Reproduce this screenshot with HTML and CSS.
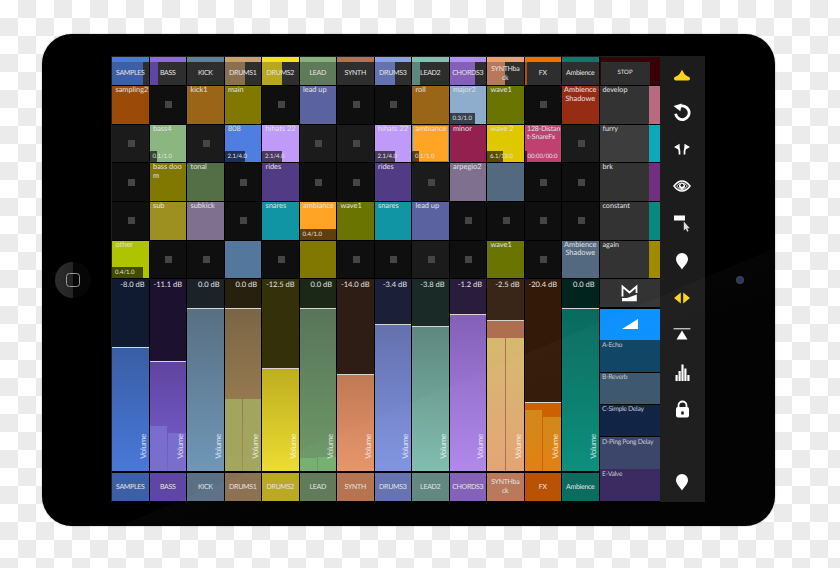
FILE: index.html
```html
<!DOCTYPE html>
<html lang="en">
<head>
<meta charset="utf-8">
<title>Live control surface</title>
<link rel="stylesheet" href="styles.css">
</head>
<body>
<div class="tablet">
  <div class="home"><div class="home-half"></div><div class="home-square"></div></div>
  <div class="camera"></div>
  <div class="app">
    <div class="mixer">
      <!-- track heads -->
      <div class="head c0"><i class="meter" style="width:84%"></i><span>SAMPLES</span></div>
      <div class="head c1"><i class="meter" style="width:22%"></i><span>BASS</span></div>
      <div class="head c2"><span>KICK</span></div>
      <div class="head c3"><i class="meter" style="width:55%"></i><span>DRUMS1</span></div>
      <div class="head c4"><i class="meter" style="width:55%"></i><span>DRUMS2</span></div>
      <div class="head c5"><i class="meter" style="width:100%"></i><span>LEAD</span></div>
      <div class="head c6"><span>SYNTH</span></div>
      <div class="head c7"><i class="meter" style="width:55%"></i><span>DRUMS3</span></div>
      <div class="head c8"><i class="meter" style="width:22%"></i><span>LEAD2</span></div>
      <div class="head c9"><i class="meter" style="width:71%"></i><span>CHORDS3</span></div>
      <div class="head c10"><i class="meter" style="width:48%"></i><span>SYNTHba<br>ck</span></div>
      <div class="head c11"><i class="meter" style="width:8%"></i><span>FX</span></div>
      <div class="head c12"><span>Ambience</span></div>
      <div class="head-stop"><span>STOP</span></div>

      <!-- row 1 -->
      <div class="clip k-rust">sampling2</div>
      <div class="clip empty"><b></b></div>
      <div class="clip k-ochre">kick1</div>
      <div class="clip k-olive">main</div>
      <div class="clip empty"><b></b></div>
      <div class="clip k-indigo">lead up</div>
      <div class="clip empty"><b></b></div>
      <div class="clip empty"><b></b></div>
      <div class="clip k-ochre">roll</div>
      <div class="clip k-sky">major2<div class="prog"><i style="width:25px"></i><span>0.3/1.0</span></div></div>
      <div class="clip k-moss">wave1</div>
      <div class="clip empty"><b></b></div>
      <div class="clip k-red center">Ambience Shadowe</div>
      <div class="scene"><span>develop</span><i class="s1"></i></div>

      <!-- row 2 -->
      <div class="clip empty lit"><b></b></div>
      <div class="clip k-sage">bass4<div class="prog"><i style="width:7px"></i><span>0.1/1.0</span></div></div>
      <div class="clip empty lit"><b></b></div>
      <div class="clip k-blue">808<div class="prog"><i style="width:20px"></i><span>2.1/4.0</span></div></div>
      <div class="clip k-lilac">hihats 22<div class="prog"><i style="width:20px"></i><span>2.1/4.0</span></div></div>
      <div class="clip empty lit"><b></b></div>
      <div class="clip empty lit"><b></b></div>
      <div class="clip k-lilac">hihats 22<div class="prog"><i style="width:20px"></i><span>2.1/4.0</span></div></div>
      <div class="clip k-amber active">ambiance<div class="prog"><i style="width:7px"></i><span>0.1/1.0</span></div></div>
      <div class="clip k-wine">minor</div>
      <div class="clip k-yellow">wave 2<div class="prog"><i style="width:16px"></i><span>6.1/13.0</span></div></div>
      <div class="clip k-pink nowrap">128-Distan<br>t-SnareFx<div class="prog"><i style="width:2px"></i><span>00:00/00:0</span></div></div>
      <div class="clip empty lit"><b></b></div>
      <div class="scene lit"><span>furry</span><i class="s2"></i></div>

      <!-- row 3 -->
      <div class="clip empty"><b></b></div>
      <div class="clip k-olive">bass doo<br>m</div>
      <div class="clip k-fern">tonal</div>
      <div class="clip empty"><b></b></div>
      <div class="clip k-violet">rides</div>
      <div class="clip empty"><b></b></div>
      <div class="clip empty"><b></b></div>
      <div class="clip k-violet">rides</div>
      <div class="clip empty lit"><b></b></div>
      <div class="clip k-mauve">arpegio2</div>
      <div class="clip k-slate"></div>
      <div class="clip empty"><b></b></div>
      <div class="clip empty"><b></b></div>
      <div class="scene"><span>brk</span><i class="s3"></i></div>

      <!-- row 4 -->
      <div class="clip empty"><b></b></div>
      <div class="clip k-mustard">sub</div>
      <div class="clip k-mauve">subkick</div>
      <div class="clip empty"><b></b></div>
      <div class="clip k-teal">snares</div>
      <div class="clip k-amber">ambiance<div class="prog"><i style="width:36px"></i><span>0.4/1.0</span></div></div>
      <div class="clip k-moss">wave1</div>
      <div class="clip k-teal">snares</div>
      <div class="clip k-indigo">lead up</div>
      <div class="clip empty"><b></b></div>
      <div class="clip empty"><b></b></div>
      <div class="clip empty"><b></b></div>
      <div class="clip empty"><b></b></div>
      <div class="scene"><span>constant</span><i class="s4"></i></div>

      <!-- row 5 -->
      <div class="clip k-lime">other<div class="prog"><i style="width:31px"></i><span>0.4/1.0</span></div></div>
      <div class="clip empty"><b></b></div>
      <div class="clip empty"><b></b></div>
      <div class="clip k-steel"></div>
      <div class="clip empty"><b></b></div>
      <div class="clip k-olive"></div>
      <div class="clip empty"><b></b></div>
      <div class="clip empty"><b></b></div>
      <div class="clip empty lit"><b></b></div>
      <div class="clip empty"><b></b></div>
      <div class="clip k-moss">wave1</div>
      <div class="clip empty"><b></b></div>
      <div class="clip k-slate center">Ambience Shadowe</div>
      <div class="scene"><span>again</span><i class="s5"></i></div>

      <!-- faders -->
      <div class="fader c0"><span class="db">-8.0 dB</span><div class="fill" style="height:124px"><span class="vol">Volume</span></div></div>
      <div class="fader c1"><span class="db">-11.1 dB</span><div class="fill" style="height:110px"><i class="lv" style="height:45px"></i><i class="lv" style="height:38px"></i><span class="vol">Volume</span></div></div>
      <div class="fader c2"><span class="db">0.0 dB</span><div class="fill" style="height:163px"><span class="vol">Volume</span></div></div>
      <div class="fader c3"><span class="db">0.0 dB</span><div class="fill" style="height:163px"><i class="lv" style="height:72px"></i><i class="lv" style="height:72px"></i><span class="vol">Volume</span></div></div>
      <div class="fader c4"><span class="db">-12.5 dB</span><div class="fill" style="height:103px"><span class="vol">Volume</span></div></div>
      <div class="fader c5"><span class="db">0.0 dB</span><div class="fill" style="height:163px"><i class="lv" style="height:13px"></i><i class="lv" style="height:14px"></i><span class="vol">Volume</span></div></div>
      <div class="fader c6"><span class="db">-14.0 dB</span><div class="fill" style="height:97px"><span class="vol">Volume</span></div></div>
      <div class="fader c7"><span class="db">-3.4 dB</span><div class="fill" style="height:147px"><span class="vol">Volume</span></div></div>
      <div class="fader c8"><span class="db">-3.8 dB</span><div class="fill" style="height:145px"><span class="vol">Volume</span></div></div>
      <div class="fader c9"><span class="db">-1.2 dB</span><div class="fill" style="height:157px"><span class="vol">Volume</span></div></div>
      <div class="fader c10"><span class="db">-2.5 dB</span><div class="fill" style="height:151px"><i class="lv" style="height:133px"></i><i class="lv" style="height:133px"></i><span class="vol">Volume</span></div></div>
      <div class="fader c11"><span class="db">-20.4 dB</span><div class="fill" style="height:69px"><i class="lv" style="height:61px"></i><i class="lv" style="height:54px"></i><span class="vol">Volume</span></div></div>
      <div class="fader c12"><span class="db">0.0 dB</span><div class="fill" style="height:163px"><span class="vol">Volume</span></div></div>

      <!-- sends -->
      <div class="sends">
        <div class="logo-box">
          <svg width="17" height="18" viewBox="0 0 17 18"><path d="M1.500 12.500V2.500L8.500 8.500 15.500 2.500V9" fill="none" stroke="#fff" stroke-width="1.800"/><path d="M1 14 6 14 15.800 10.500V17.300H1Z" fill="#fff"/></svg>
        </div>
        <div class="send-blue"><svg width="16" height="10" viewBox="0 0 16 10"><path d="M0 10 16 0V10Z" fill="#fff"/></svg></div>
        <div class="send s-a">A-Echo</div>
        <div class="send s-b">B-Reverb</div>
        <div class="send s-c">C-Simple Delay</div>
        <div class="send s-d">D-Ping Pong Delay</div>
        <div class="send s-e">E-Valve</div>
      </div>

      <!-- track feet -->
      <div class="foot c0">SAMPLES</div>
      <div class="foot c1">BASS</div>
      <div class="foot c2">KICK</div>
      <div class="foot c3">DRUMS1</div>
      <div class="foot c4">DRUMS2</div>
      <div class="foot c5">LEAD</div>
      <div class="foot c6">SYNTH</div>
      <div class="foot c7">DRUMS3</div>
      <div class="foot c8">LEAD2</div>
      <div class="foot c9">CHORDS3</div>
      <div class="foot c10">SYNTHba<br>ck</div>
      <div class="foot c11">FX</div>
      <div class="foot c12">Ambience</div>
    </div>

    <div class="side">
      <div class="tool"><svg width="18" height="12" viewBox="0 0 18 12"><path d="M1 9.500C1 7.500 4.500 7.500 6.500 5L9 .8 11.500 5C13.500 7.500 17 7.500 17 9.500 17 11 16 11.600 14.500 11.600H3.500C2 11.600 1 11 1 9.500Z" fill="#ffd21e"/></svg></div>
      <div class="tool"><svg width="18" height="18" viewBox="0 0 18 18"><path d="M6 3.800A6.800 6.800 0 1 1 2.600 10.800" fill="none" stroke="#fff" stroke-width="2.800"/><path d="M.5 3 8.800 .6 7.300 8.200Z" fill="#fff"/></svg></div>
      <div class="tool"><svg width="18" height="12" viewBox="0 0 18 12"><path d="M6.500 11.500V8.500C6.500 6.500 6 5 4 4.500M11.500 11.500V8.500C11.500 6.500 12 5 14 4.500" fill="none" stroke="#fff" stroke-width="1.700"/><path d="M1 4 6.500 .8 6.800 7.200ZM17 4 11.500 .8 11.200 7.200Z" fill="#fff"/></svg></div>
      <div class="tool"><svg width="18" height="12" viewBox="0 0 18 12"><path d="M1 6C4 2 6.500 .9 9 .9S14 2 17 6C14 10 11.500 11.100 9 11.100S4 10 1 6Z" fill="none" stroke="#fff" stroke-width="1.500"/><path d="M3.800 6C5.500 3.600 7 3 9 3s3.500 .6 5.200 3C12.500 8.600 11 9.500 9 9.500S5.500 8.600 3.800 6Z" fill="none" stroke="#fff" stroke-width=".9"/><circle cx="9" cy="6" r="3" fill="#fff"/><circle cx="9" cy="5.300" r="1.500" fill="#1c1c1c"/></svg></div>
      <div class="tool"><svg width="18" height="18" viewBox="0 0 18 18"><rect x="1" y="1.500" width="11" height="5" fill="#fff"/><path d="M10.800 7.500V16.500L12.800 14.800 14.200 17.700 15.500 17 14.200 14.200H16.800Z" fill="#ddd"/></svg></div>
      <div class="tool"><svg width="14" height="18" viewBox="0 0 14 18"><path d="M7 17.500C5 14 1 11 1 7A6 6 0 0 1 13 7C13 11 9 14 7 17.500Z" fill="#fff"/></svg></div>
      <div class="tool"><svg width="18" height="12" viewBox="0 0 18 12"><path d="M7.800 .5V11.500L1 6ZM10.200 .5V11.500L17 6Z" fill="#ffd21e"/></svg></div>
      <div class="tool"><svg width="18" height="13" viewBox="0 0 18 13"><path d="M.6 .8H17.400" stroke="#fff" stroke-width="1"/><path d="M9 2.500 14.500 11.500H3.500Z" fill="#fff"/></svg></div>
      <div class="tool"><svg width="15" height="17" viewBox="0 0 15 17"><path d="M.5 11h2.200v6H.5ZM3.500 7H5.700v10H3.500ZM6.400 .5H8.600V17H6.400ZM9.300 4.500h2.200V17H9.300ZM12.300 11h2.200v6h-2.200Z" fill="#fff"/></svg></div>
      <div class="tool"><svg width="15" height="18" viewBox="0 0 15 18"><path d="M3.500 8V5.500a4 4 0 0 1 8 0V8" fill="none" stroke="#fff" stroke-width="1.800"/><rect x="1" y="7" width="13" height="10.500" rx="2" fill="#fff"/><path d="M6.200 14.500V12.500a1.300 1.300 0 1 1 2.600 0v2Z" fill="#1c1c1c"/></svg></div>
      <div class="tool tool-end"><svg width="14" height="18" viewBox="0 0 14 18"><path d="M7 17.500C5 14 1 11 1 7A6 6 0 0 1 13 7C13 11 9 14 7 17.500Z" fill="#fff"/></svg></div>
    </div>
  </div>
  <div class="glare"></div>
</div>
</body>
</html>
```
FILE: styles.css
```css
* { box-sizing: border-box; }

html, body { height: 100%; }

body {
  margin: 0;
  padding: 34px 0 0 42px;
  overflow: hidden;
  background: conic-gradient(#ebebeb 25%, #fff 0 50%, #ebebeb 0 75%, #fff 0) 0 0 / 36px 36px;
  font-family: "Lato", "Liberation Sans", sans-serif;
  letter-spacing: -.2px;
  text-rendering: geometricPrecision;
  color: #e2e2e2;
}

.tablet {
  position: relative;
  width: 733px;
  height: 492px;
  padding: 22px 70px 24px 69px;
  background: #000;
  border-radius: 30px;
  box-shadow: 0 0 1.5px #8a8a8a;
}

.glare {
  position: absolute;
  inset: 0;
  border-radius: 30px;
  pointer-events: none;
  background: linear-gradient(157deg, rgba(255,255,255,.05) 42%, rgba(255,255,255,.012) 72%);
  clip-path: polygon(733px 214px, 78px 492px, 733px 492px);
}

.home {
  position: absolute;
  left: 13px;
  top: 228px;
  width: 36px;
  height: 36px;
  border-radius: 50%;
  background: #060606;
  overflow: hidden;
  display: flex;
  align-items: center;
  justify-content: center;
}

.home-half {
  position: absolute;
  left: 0;
  top: 0;
  width: 18px;
  height: 36px;
  background: linear-gradient(90deg, #2c2c2c, #242424);
}

.home-square {
  position: relative;
  width: 14px;
  height: 14px;
  border: 1.500px solid #9a9a9a;
  border-radius: 3.500px;
}

.camera {
  position: absolute;
  left: 694px;
  top: 242px;
  width: 8px;
  height: 8px;
  border-radius: 50%;
  background: radial-gradient(circle, #1c2f90 0 15%, #34383e 45%, #3e4044 70%, #111 100%);
}

.app {
  display: flex;
  width: 594px;
  height: 446px;
  background: #1c1c1c;
}

.mixer {
  display: grid;
  grid-template-columns: repeat(13, 36.500px) 60px;
  grid-template-rows: 28px repeat(5, 37.700px) 192px 28.500px;
  gap: 1px;
  width: 548.500px;
  padding: 1px 0 1.500px 1px;
  background: #000;
  box-shadow: inset 1px 1px 0 #202020;
}

/* track colours */
.c0  { --strip:#4a7bd8; --col:#3d5fa8; --dark:#101a30; --f1:#395ea3; --f2:#4a78da; }
.c1  { --strip:#8e6ae0; --col:#5f46a5; --dark:#1c1230; --f1:#5f44a0; --f2:#7760cf; --lv:#7a70cc; }
.c2  { --strip:#60809a; --col:#5a7085; --dark:#1b2228; --f1:#586f82; --f2:#7097b8; }
.c3  { --strip:#c8a468; --col:#8a7050; --dark:#28200f; --f1:#7a6545; --f2:#aa8a58; --lv:#a2a860; }
.c4  { --strip:#f4e420; --col:#b8a820; --dark:#33300a; --f1:#bfae20; --f2:#ecdc30; }
.c5  { --strip:#88b080; --col:#5f7a58; --dark:#1b2818; --f1:#58755a; --f2:#6f9a68; --lv:#74b272; }
.c6  { --strip:#b87050; --col:#b5734f; --dark:#2e1d14; --f1:#c07a55; --f2:#e89468; }
.c7  { --strip:#8aa0ee; --col:#6472b0; --dark:#1b2038; --f1:#6471ad; --f2:#8094e2; }
.c8  { --strip:#80c0b0; --col:#60877f; --dark:#1a2a26; --f1:#5e877e; --f2:#80bdaf; }
.c9  { --strip:#b090f0; --col:#8460b8; --dark:#2a1c3c; --f1:#8460b8; --f2:#b088ec; }
.c10 { --strip:#f0a070; --col:#b8785a; --dark:#3a2618; --f1:#ae6f50; --f2:#ae6f50; --lv:linear-gradient(#d8c070, #e8a878); }
.c11 { --strip:#f07000; --col:#b85000; --dark:#331a08; --f1:#cc5f00; --f2:#cc5f00; --lv:linear-gradient(#d08c1a, #e48210); }
.c12 { --strip:#0c7a6a; --col:#0a6a5e; --dark:#02241f; --f1:#0a6a5e; --f2:#0a8f7c; }

/* heads */
.head, .head-stop {
  position: relative;
  display: flex;
  align-items: center;
  justify-content: center;
  font-size: 7px;
  line-height: 8.700px;
  letter-spacing: -.3px;
  text-align: center;
  background: #2e2e2e;
}

.head { border-top: 5.500px solid var(--strip); }

.head span, .head-stop span { position: relative; }

.meter {
  position: absolute;
  left: 0;
  top: 0;
  bottom: 0;
  background: var(--col);
}

.head-stop {
  border-top: 5.500px solid #3a0008;
  border-left: 1px solid #3a0008;
  border-right: 10.500px solid #3a0008;
  font-size: 6px;
  letter-spacing: 0;
}

/* clips */
.clip {
  position: relative;
  padding: 0 2px 0 3.500px;
  font-size: 7.400px;
  line-height: 8.700px;
  letter-spacing: 0;
  overflow: hidden;
}

.clip.center { text-align: center; padding-left: 1px; padding-right: 1px; }

.clip.nowrap {
  padding-left: 2.500px;
  padding-right: 0;
  font-size: 7px;
  letter-spacing: -.15px;
  white-space: nowrap;
}

.empty {
  display: flex;
  align-items: center;
  justify-content: center;
  background: #0f0f0f;
}

.empty.lit { background: #1b1b1b; }

.empty b {
  display: block;
  width: 7px;
  height: 7px;
  background: #454545;
}

.active { outline: 1px solid #3a9ad8; outline-offset: -1px; }

.k-rust { background: #9c4a08; }
.k-ochre { background: #9b6518; }
.k-olive { background: #807800; }
.k-indigo { background: #5a62a0; }
.k-sky { background: #8eaccc; }
.k-moss { background: #697500; }
.k-red { background: #962c14; }
.k-sage { background: #8bb680; }
.k-blue { background: #4f7ee0; }
.k-lilac { background: #c09af8; }
.k-amber { background: #ffa424; }
.k-wine { background: #942050; }
.k-yellow { background: #e0c800; }
.k-pink { background: #c0406f; }
.k-fern { background: #546f46; }
.k-violet { background: #523b85; }
.k-mauve { background: #807090; }
.k-slate { background: #52697f; }
.k-mustard { background: #9e9020; }
.k-teal { background: #0f95a4; }
.k-lime { background: #aec400; }
.k-steel { background: #53789c; }

.prog {
  position: absolute;
  left: 0;
  right: 0;
  bottom: 0;
  height: 11px;
  font-size: 6px;
  line-height: 11px;
  letter-spacing: 0;
  white-space: nowrap;
}

.prog i {
  position: absolute;
  left: 0;
  top: 0;
  bottom: 0;
  background: rgba(0, 0, 0, .62);
}

.prog span { position: relative; padding-left: 3px; }

/* scenes */
.scene {
  display: flex;
  font-size: 7.200px;
  line-height: 8.700px;
  letter-spacing: 0;
  background: #333;
}

.scene.lit { background: #3d3d3d; }

.scene span {
  flex: 1;
  padding: 0 0 0 3px;
}

.scene i { width: 10.500px; }

.s1 { background: #b86a80; }
.s2 { background: #10a8b8; }
.s3 { background: #70307f; }
.s4 { background: #08897d; }
.s5 { background: #a08a00; }

/* faders */
.fader {
  position: relative;
  display: flex;
  flex-direction: column;
  justify-content: flex-end;
  background: var(--dark);
}

.db {
  position: absolute;
  top: 1px;
  right: 4px;
  font-size: 7.500px;
  line-height: 9px;
  letter-spacing: 0;
  white-space: nowrap;
}

.fill {
  position: relative;
  display: flex;
  align-items: flex-end;
  gap: 1px;
  border-top: 1.200px solid #d6d6d0;
  background: linear-gradient(var(--f1), var(--f2));
}

.lv {
  flex: 1;
  background: var(--lv);
  opacity: .92;
}

.vol {
  position: absolute;
  right: 1px;
  bottom: 13px;
  writing-mode: vertical-rl;
  transform: rotate(180deg);
  font-size: 8px;
  line-height: 10px;
  letter-spacing: -.3px;
  color: rgba(255, 255, 255, .75);
}

/* sends */
.sends {
  grid-row: span 2;
  display: flex;
  flex-direction: column;
  gap: .6px;
}

.logo-box {
  flex: 0 0 28px;
  display: flex;
  align-items: center;
  justify-content: center;
  background: #333;
  margin-bottom: .6px;
}

.send-blue {
  flex: 1;
  display: flex;
  align-items: center;
  justify-content: center;
  background: #0a90ff;
}

.send {
  flex: 1;
  padding: .5px 0 0 2.500px;
  font-size: 6.800px;
  line-height: 8px;
  letter-spacing: -.3px;
  color: #c4c8d0;
}

.s-a { background: #0e4464; }
.s-b { background: #3c566e; }
.s-c { background: #0f2244; }
.s-d { background: #3a4468; }
.s-e { background: #38285e; }

/* feet */
.foot {
  display: flex;
  align-items: center;
  justify-content: center;
  margin-top: 1px;
  font-size: 7px;
  line-height: 8.700px;
  letter-spacing: -.3px;
  text-align: center;
  background: var(--col);
}

/* side bar */
.side {
  flex: 1;
  display: flex;
  flex-direction: column;
  background: #1c1c1c;
}

.tool {
  flex: 0 0 37.200px;
  display: flex;
  align-items: center;
  justify-content: center;
}

.tool-end { margin-top: auto; margin-bottom: 1.500px; }
```
